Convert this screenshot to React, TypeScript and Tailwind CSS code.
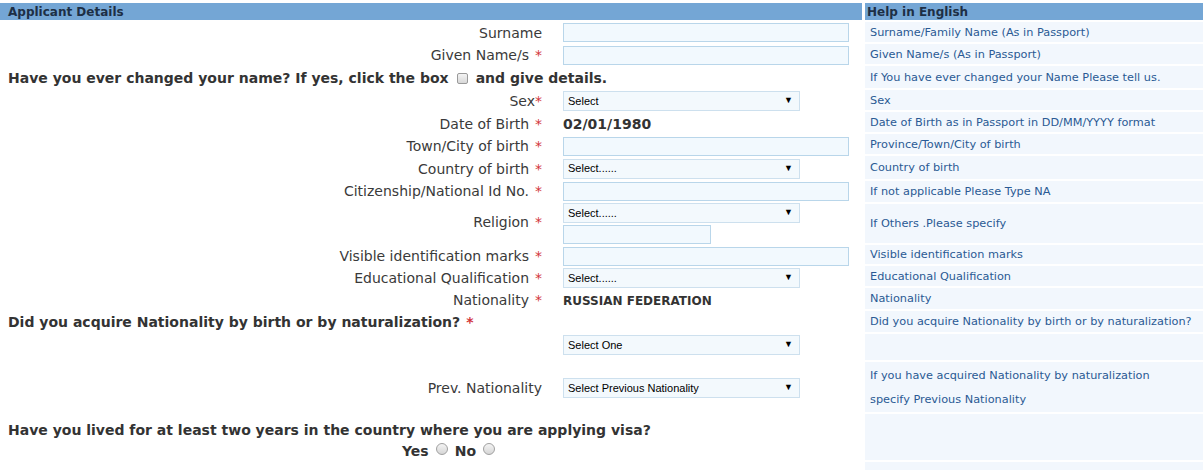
import React from "react";

const font = { fontFamily: '"DejaVu Sans", Verdana, sans-serif' };

function Star() {
  return <span className="text-[#d2343a] ml-[6px]">*</span>;
}

function Label({ children, star = true, tight = false }: { children: React.ReactNode; star?: boolean; tight?: boolean }) {
  return (
    <div className="w-[542px] shrink-0 text-right text-[14px] text-[#3a3a3a] leading-none">
      {children}
      {star && (tight ? <span className="text-[#d2343a]">*</span> : <Star />)}
    </div>
  );
}

function TextInput({ w = "w-[286px]" }: { w?: string }) {
  return <div className={`${w} h-[19px] border border-[#b9d6ea] bg-[#f2f9fe]`} />;
}

function Select({ text }: { text: string }) {
  return (
    <div
      className="w-[237px] h-[20px] border border-[#cde0ee] bg-[#f3f9fd] flex items-center justify-between pl-[4px] pr-[6px] text-[11px] text-black"
      style={{ fontFamily: '"Liberation Sans", Arial, sans-serif' }}
    >
      <span>{text}</span>
      <span className="text-[9px]">▼</span>
    </div>
  );
}

function Row({ h, children, items = "items-center" }: { h: string; children: React.ReactNode; items?: string }) {
  return <div className={`flex shrink-0 ${items} ${h}`}>{children}</div>;
}

function Field({ children }: { children: React.ReactNode }) {
  return <div className="ml-[21px]">{children}</div>;
}

function Check() {
  return <span className="inline-block w-[11px] h-[11px] rounded-[2px] border border-[#9a9a9a] bg-gradient-to-b from-[#f4f4f4] to-[#d8d8d8] align-[-1px] mx-[8px]" />;
}

function Radio() {
  return <span className="inline-block w-[12px] h-[12px] rounded-full border border-[#a0a0a0] bg-gradient-to-b from-[#f4f4f4] to-[#d6d6d6] align-[1px] mx-[7px]" />;
}

function HelpRow({ h, children }: { h: string; children?: React.ReactNode }) {
  return (
    <div className={`${h} shrink-0 bg-[#f2f7fd] pl-[5px] pt-[1px] flex items-center text-[11.3px] text-[#2a5a94] leading-none whitespace-nowrap`}>
      {children}
    </div>
  );
}

export default function App() {
  return (
    <div className="w-[1203px] h-[470px] bg-white overflow-hidden flex pt-[3px]" style={font}>
      <div className="w-[862px] shrink-0 flex flex-col">
        <div className="h-[17px] shrink-0 bg-[#74a6d5] pl-[8px] flex items-center text-[12px] font-bold text-[#1d2f45]">Applicant Details</div>
        <Row h="h-[23px] mt-[1px]">
          <Label star={false}>Surname</Label>
          <Field><TextInput /></Field>
        </Row>
        <Row h="h-[22px]">
          <Label>Given Name/s</Label>
          <Field><TextInput /></Field>
        </Row>
        <Row h="h-[24px]">
          <div className="pl-[8px] text-[14px] font-bold text-[#333] leading-none">
            Have you ever changed your name? If yes, click the box<Check />and give details.
          </div>
        </Row>
        <Row h="h-[22px]">
          <Label tight>Sex</Label>
          <Field><Select text="Select" /></Field>
        </Row>
        <Row h="h-[23px]">
          <Label>Date of Birth</Label>
          <Field><span className="text-[14px] font-bold text-[#333]">02/01/1980</span></Field>
        </Row>
        <Row h="h-[22px]">
          <Label>Town/City of birth</Label>
          <Field><TextInput /></Field>
        </Row>
        <Row h="h-[23px]">
          <Label>Country of birth</Label>
          <Field><Select text="Select......" /></Field>
        </Row>
        <Row h="h-[22px]">
          <Label>Citizenship/National Id No.</Label>
          <Field><TextInput /></Field>
        </Row>
        <Row h="h-[43px]">
          <div className="self-end mb-[16px]"><Label>Religion</Label></div>
          <Field>
            <div className="flex flex-col gap-[2px]">
              <Select text="Select......" />
              <TextInput w="w-[148px]" />
            </div>
          </Field>
        </Row>
        <Row h="h-[22px]">
          <Label>Visible identification marks</Label>
          <Field><TextInput /></Field>
        </Row>
        <Row h="h-[22px]">
          <Label>Educational Qualification</Label>
          <Field><Select text="Select......" /></Field>
        </Row>
        <Row h="h-[22px]">
          <Label>Nationality</Label>
          <Field><span className="text-[12px] font-bold text-[#333]">RUSSIAN FEDERATION</span></Field>
        </Row>
        <Row h="h-[22px]">
          <div className="pl-[8px] text-[14px] font-bold text-[#333] leading-none">
            Did you acquire Nationality by birth or by naturalization?<Star />
          </div>
        </Row>
        <Row h="h-[24px]">
          <div className="w-[542px] shrink-0" />
          <Field><Select text="Select One" /></Field>
        </Row>
        <Row h="h-[62px]">
          <Label star={false}>Prev. Nationality</Label>
          <Field><Select text="Select Previous Nationality" /></Field>
        </Row>
        <Row h="h-[22px]">
          <div className="pl-[8px] text-[14px] font-bold text-[#333] leading-none">
            Have you lived for at least two years in the country where you are applying visa?
          </div>
        </Row>
        <Row h="h-[18px]">
          <div className="pl-[402px] text-[14px] font-bold text-[#333] leading-none">
            Yes<Radio />No<Radio />
          </div>
        </Row>
      </div>
      <div className="ml-[3px] flex-1 flex flex-col gap-[2px]">
        <div className="h-[17px] shrink-0 bg-[#74a6d5] pl-[2px] flex items-center text-[12px] font-bold text-[#1d2f45]">Help in English</div>
        <HelpRow h="h-[20px]">Surname/Family Name (As in Passport)</HelpRow>
        <HelpRow h="h-[20px]">Given Name/s (As in Passport)</HelpRow>
        <HelpRow h="h-[22px]">If You have ever changed your Name Please tell us.</HelpRow>
        <HelpRow h="h-[20px]">Sex</HelpRow>
        <HelpRow h="h-[20px]">Date of Birth as in Passport in DD/MM/YYYY format</HelpRow>
        <HelpRow h="h-[20px]">Province/Town/City of birth</HelpRow>
        <HelpRow h="h-[23px]">Country of birth</HelpRow>
        <HelpRow h="h-[21px]">If not applicable Please Type NA</HelpRow>
        <HelpRow h="h-[39px]">If Others .Please specify</HelpRow>
        <HelpRow h="h-[19px]">Visible identification marks</HelpRow>
        <HelpRow h="h-[20px]">Educational Qualification</HelpRow>
        <HelpRow h="h-[21px]">Nationality</HelpRow>
        <HelpRow h="h-[21px]">Did you acquire Nationality by birth or by naturalization?</HelpRow>
        <HelpRow h="h-[26px]" />
        <div className="h-[50px] shrink-0 bg-[#f2f7fd] pl-[5px] pt-[2px] flex flex-col justify-center text-[11.3px] text-[#2a5a94] leading-[24px] whitespace-nowrap">
          <span>If you have acquired Nationality by naturalization</span>
          <span>specify Previous Nationality</span>
        </div>
        <HelpRow h="h-[46px]" />
        <HelpRow h="h-[20px]" />
      </div>
    </div>
  );
}
